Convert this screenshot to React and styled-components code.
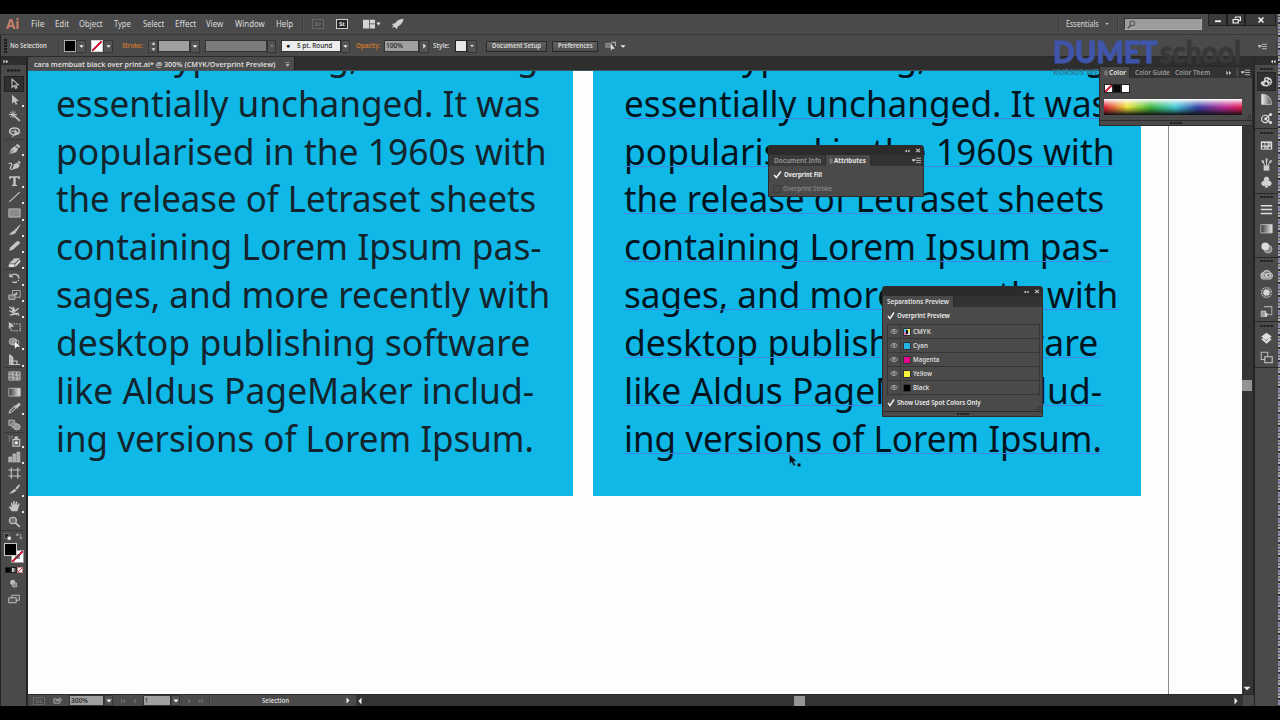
import { useLayoutEffect, useRef, useState } from "react";
import styled, { createGlobalStyle, css } from "styled-components";

const GlobalStyle = createGlobalStyle`
  * {
    box-sizing: border-box;
  }
  body {
    margin: 0;
    background: #000;
    overflow: hidden;
  }
`;

const ui = `"Noto Sans", "Open Sans", sans-serif`;

const Screen = styled.div`
  position: relative;
  display: flex;
  flex-direction: column;
  width: 1280px;
  height: 720px;
  padding: 14px 0;
  overflow: hidden;
  background: #000;
  font-family: ${ui};
  font-size: 7px;
  color: #dcdcdc;
`;

const MainRow = styled.div`
  display: flex;
  flex: 1;
  min-height: 0;
`;

const Bars = styled.div`
  display: flex;
  flex-direction: column;
  width: 1278px;
`;

const MenuBar = styled.div`
  display: flex;
  align-items: center;
  height: 21px;
  flex: none;
  background: #4a4a4a;
  border-bottom: 1px solid #393939;
  font-size: 8.4px;
`;

const ControlBar = styled.div`
  display: flex;
  align-items: center;
  height: 22px;
  flex: none;
  padding-top: 1px;
  background: #4a4a4a;
  border-bottom: 1px solid #2a2a2a;
  border-left: 1px solid #252525;
`;

const FitBox = styled.span`
  display: block;
  flex: none;
  width: ${(p) => p.$w}px;
  margin-left: ${(p) => p.$ml || 0}px;
  color: ${(p) => p.$color || "inherit"};
  font-weight: ${(p) => p.$weight || "inherit"};
  line-height: 1.3;
  white-space: nowrap;
`;

const FitInner = styled.span`
  display: inline-block;
  transform-origin: 0 50%;
`;

// text squeezed or stretched to an exact width
function Fit({ w, ml, color, weight, children }) {
  const ref = useRef(null);
  const [scale, setScale] = useState(1);

  useLayoutEffect(() => {
    setScale(w / ref.current.offsetWidth);
  }, [w]);

  return (
    <FitBox $w={w} $ml={ml} $color={color} $weight={weight}>
      <FitInner ref={ref} style={{ transform: `scaleX(${scale})` }}>
        {children}
      </FitInner>
    </FitBox>
  );
}

const Svg = styled.svg`
  display: block;
  flex: none;
  width: ${(p) => p.$w || 14}px;
  height: ${(p) => p.$h || p.$w || 14}px;
  margin-left: ${(p) => p.$ml || 0}px;
  fill: none;
  stroke: none;
  color: ${(p) => p.$color || "#c4c4c4"};
`;

const c = "currentColor";

const glyphs = {
  selection: <path d="M5 1.5v11l2.600-2.400 1.700 3.600 1.700-.8-1.600-3.500 3.400-.3z" stroke={c} strokeWidth="1.300" fill="#2c2c2c" />,
  direct: <path d="M5 1v12l2.800-2.600 1.800 4 2-.9-1.800-3.900 3.600-.3z" fill={c} />,
  wand: (
    <>
      <path d="M6.500 6.500 14.500 14.500" stroke={c} strokeWidth="2" />
      <path d="M6 1v10M1 6h10M2.500 2.500l7 7M9.500 2.500l-7 7" stroke={c} strokeWidth="1.200" />
    </>
  ),
  lasso: (
    <>
      <ellipse cx="8" cy="7" rx="6" ry="4.500" stroke={c} strokeWidth="2" />
      <path d="M4 8c3-3 7 0 4 3-2 2-3 1-2 4" stroke={c} strokeWidth="1.400" />
      <path d="m8 4 1 9 2-2 3 0z" fill={c} />
    </>
  ),
  pen: (
    <>
      <path d="M1.500 14.500 4 7.500l4.500-3.500 4 3.800-2.400 4.500z" fill={c} />
      <path d="m9.500 3.200 1.800-2.300 4 3.700-1.900 2z" fill={c} />
      <path d="m2 14 5-4.800" stroke="#4a4a4a" />
    </>
  ),
  curve: (
    <>
      <path d="m5.500 14 1.700-7 3.800-2 3.500 3-2 4z" fill={c} />
      <path d="m11.500 4.200 1.500-2 2.800 2.500-1.500 2z" fill={c} />
      <path d="M.8 6.500c3-2.500 5 0 3.200 3S1.500 14 6 13.500" stroke={c} strokeWidth="1.500" />
    </>
  ),
  type: <path d="M1.500 1.500h13v4h-1.200L12 3.800H9.500v9l1.800.7v1.200H4.700v-1.200l1.800-.7v-9H4L2.700 5.500H1.500z" fill={c} />,
  line: <path d="M1.500 14.500 14.500 1.500" stroke={c} strokeWidth="1.400" />,
  rect: <path d="M1 2.500h14v11H1z" fill="#8b8b8b" stroke={c} strokeWidth="1" />,
  brush: (
    <>
      <path d="M15 1 8 8.500l1.700 1.700z" fill={c} stroke={c} />
      <path d="M7.500 8.500 10 11c-1.500 3-5 3.500-9.500 3 3-.8 3.500-4.500 7-5.500z" fill={c} />
    </>
  ),
  pencil: <path d="m1.500 14.500 1-4.500L11 1.500q2-.7 3.500 1.500 .5 1-.2 2L6 13z" fill={c} />,
  eraser: (
    <>
      <path d="m1 10 7-7h7L8 10z" fill={c} />
      <path d="M1 11h7v3.500H1zM9 11l6-6.500v3.500L9 14.500z" fill="#e2e2e2" />
    </>
  ),
  rotate: (
    <>
      <path d="M4 4.500A5.500 5.500 0 1 1 5 13" stroke={c} strokeWidth="1.800" strokeDasharray="13 1.500 2 1.500" />
      <path d="M1.500 1.500v5.500h5.500z" fill={c} />
    </>
  ),
  scale: (
    <>
      <path d="M5.500 2h9.500v9H5.500z" stroke={c} />
      <path d="M1 8h7.500v6H1z" fill="#777" stroke={c} />
      <path d="m7 8 4-3.500v3z" fill={c} stroke={c} />
    </>
  ),
  warp: (
    <>
      <path d="M1.500 3c4 0 4 5 7 5s2-4 5-3M1.500 8c3-1 4 5 12 3M2 13c3 1 6-3 12 1" stroke={c} strokeWidth="1.700" />
      <path d="M6 1 9.500 7l-5 6z" fill={c} />
    </>
  ),
  free: (
    <>
      <path d="M3.500 4h11.500v9H3.500z" stroke={c} strokeDasharray="2 1.300" strokeWidth="1.500" />
      <path d="M1 1v9.500l3-3H8z" fill={c} />
    </>
  ),
  builder: (
    <>
      <circle cx="6" cy="6" r="4.500" stroke={c} fill="#888" />
      <circle cx="9.500" cy="7.500" r="4" stroke={c} />
      <path d="M8.500 6v9.500l2.500-2.500h4z" fill="#eee" />
    </>
  ),
  perspective: (
    <>
      <path d="M2 1v13h13M2 4l4 1.500V14M2 8.500l9 1V14M2 1l4 4" stroke={c} strokeWidth="1.500" />
      <path d="M3 5h3v9H3z" fill={c} />
    </>
  ),
  mesh: (
    <>
      <path d="M1 2.500h14v11H1z" fill="#757575" stroke={c} />
      <path d="M1.500 6c4-2 8 3 13 0M1.500 10c4-2 8 3 13 0M6 2.500c-2 4 2 7 0 11M11 2.500c-2 4 2 7 0 11" stroke="#ddd" strokeWidth=".9" />
    </>
  ),
  gradient: (
    <>
      <defs>
        <linearGradient id="grayRamp">
          <stop offset="0" stopColor="#383838" />
          <stop offset="1" stopColor="#e8e8e8" />
        </linearGradient>
      </defs>
      <path d="M1 3h14v10.500H1z" fill="url(#grayRamp)" stroke={c} />
    </>
  ),
  dropper: (
    <>
      <path d="m1.500 14.500 1-3L8 6l2 2-5.500 5.500z" stroke={c} strokeWidth="1.300" />
      <path d="m7.500 4 4.500 4.500M9 6l3.500-4q1.500-.6 2.200.500t-.2 2L11 8z" fill={c} stroke={c} />
    </>
  ),
  blend: (
    <>
      <path d="M1 1.500h7v7H1z" fill="#777" stroke={c} />
      <circle cx="8" cy="8.500" r="3.500" fill="#777" stroke={c} />
      <circle cx="11" cy="10.500" r="4" fill="#999" stroke={c} />
    </>
  ),
  spray: (
    <>
      <path d="M6 6h8.500v9H6z" fill="#6c6c6c" stroke={c} strokeWidth="1.300" />
      <path d="M8 2h4.500v4H8z" fill={c} />
      <circle cx="10.200" cy="10.300" r="2" fill="#eee" />
      <path d="M1 2h1.500M4 2h1.500M1 5h1.500M4 4h1.500M1 8h1.500" stroke={c} />
    </>
  ),
  graph: <path d="M1 14.500V8h3.500v6M6 14.500V4h3.500v10M11 14.500V1.500h3.500v13M.5 14.500h15" stroke={c} fill="#aaa" />,
  artboard: <path d="M4 .5v15M12 .5v15M.5 4h15M.5 12h15" stroke={c} strokeWidth="1.400" />,
  slice: (
    <>
      <path d="m1 14.500 7-7 2.500 2.500C7 13 4 14 1 14.500z" fill={c} />
      <path d="m9 7 4.500-5.500 1.500 1.500L11 9z" fill={c} />
    </>
  ),
  hand: (
    <path
      d="M4.500 15 1 9.500q0-1.500 1.700-1L4.500 10 3.500 4q.6-1.400 1.700 0l1 3.500L6.500 1.800q.8-1.400 1.700 0l.3 5.300L9.800 2.300q1.200-1 1.700.200l-.6 5 2-3q1.400-.8 1.400.5L12.700 11 11.500 15z"
      fill={c}
    />
  ),
  zoom: (
    <>
      <circle cx="6" cy="6" r="4.300" fill="#747474" stroke={c} strokeWidth="1.500" />
      <path d="m9 9 5.500 5.500" stroke={c} strokeWidth="2.200" />
    </>
  ),
  palette: (
    <>
      <path d="M8 2.500c4 0 7 2.500 7 5.500s-3 6-7.500 6S1 11.500 1 9.500s2.500-1.300 3.500-2S4 2.500 8 2.500z" fill="#d5d5d5" />
      <circle cx="8" cy="5.500" r="1.200" fill="#333" />
      <circle cx="11.500" cy="7" r="1.200" fill="#333" />
      <circle cx="7.500" cy="10.500" r="1.900" fill="#333" />
      <path d="m10 14 4-7" stroke="#555" />
    </>
  ),
  guide: (
    <>
      <defs>
        <linearGradient id="guideRamp">
          <stop offset="0" stopColor="#eee" />
          <stop offset="1" stopColor="#555" />
        </linearGradient>
      </defs>
      <path d="M2 1.500c8 0 12 5 12 12.500H2z" fill="url(#guideRamp)" stroke="#ccc" />
    </>
  ),
  share: (
    <>
      <circle cx="6.500" cy="8.500" r="4.500" stroke="#ddd" strokeWidth="1.500" />
      <circle cx="7" cy="8.500" r="1.800" fill="#ddd" />
      <path d="m7 8 6-5M7 9l6 4" stroke="#ddd" strokeWidth="1.500" />
      <circle cx="13" cy="3" r="1.900" fill="#ddd" />
      <circle cx="13" cy="13" r="1.900" fill="#ddd" />
    </>
  ),
  swatches: (
    <>
      <path d="M1 3h14v10H1z" fill="#ddd" />
      <path d="M2.500 5h3v3h-3zM6.500 5h3v3h-3zM10.500 9.500h3v2.500h-3zM2.500 9.500h3v2.500h-3z" fill="#555" />
      <path d="M10.500 5h3v3h-3zM6.500 9.500h3v2.500h-3z" fill="#999" />
    </>
  ),
  brushes: (
    <>
      <path d="M4.500 9h7v6.500h-7z" fill="#ccc" />
      <path d="M6 9 3.500 5M8 9V4M10 9l2-4" stroke="#ccc" strokeWidth="1.200" />
      <path d="M1.500 3.500 4 2.500l1.500 3-2 1zM7 .5h2.500L9 5H7zM12 3l3-.5L13.500 6h-2z" fill="#ccc" />
    </>
  ),
  club: (
    <path
      d="M8 1a3 3 0 0 1 2.500 5A3.200 3.200 0 1 1 9 11.500L10.500 14h-5L7 11.500A3.200 3.200 0 1 1 5.500 6 3 3 0 0 1 8 1z"
      fill="#d0d0d0"
    />
  ),
  lines: <path d="M1 3.500h14M1 8h14M1 13h14" stroke="#ddd" strokeWidth="1.800" />,
  transparency: (
    <>
      <circle cx="10" cy="10" r="4.800" fill="#8a8a8a" stroke="#bbb" />
      <circle cx="6.500" cy="6.500" r="4.800" fill="#ddd" />
    </>
  ),
  cloud: (
    <>
      <path d="M4.500 13.500a4 4 0 0 1-.3-7.800A5 5 0 0 1 13 6a4 4 0 0 1-.8 7.500z" stroke="#ccc" strokeWidth="1.300" fill="#777" />
      <ellipse cx="5.800" cy="9.500" rx="2.500" ry="2" stroke="#ddd" strokeWidth="1.300" />
      <ellipse cx="10.200" cy="9" rx="2.700" ry="2.300" stroke="#ddd" strokeWidth="1.300" />
    </>
  ),
  sun: (
    <>
      <circle cx="8" cy="8" r="6" stroke="#bbb" strokeWidth="2" strokeDasharray="1.300 1" />
      <circle cx="8" cy="8" r="4" fill="#d5d5d5" />
    </>
  ),
  styles: (
    <>
      <path d="M5 2h9.500v10H9" stroke="#aaa" strokeWidth="1.300" />
      <path d="M1.500 7.500H7V14H1.500z" fill="#999" stroke="#ccc" />
      <path d="m6 7 1.500 3 3 .5-2 2 .5 2.500-3-1.500" fill="#ddd" />
    </>
  ),
  layers: <path d="m8 1 6.500 4.500L8 10 1.500 5.500zM1.500 9 4 7.500 8 11l4-3.500L14.500 9 8 14.500z" fill="#ddd" />,
  boards: (
    <>
      <path d="M1.500 1.500h8v9h-8z" stroke="#bbb" strokeWidth="1.300" />
      <path d="M6 7h9v7.500H6z" fill="#4a4a4a" stroke="#ccc" strokeWidth="1.300" />
    </>
  ),
  tri: <path d="M1 4h14l-7 8z" fill={c} />,
  triRight: <path d="M4 1v14l8-7z" fill={c} />,
  triLeft: <path d="M12 1v14L4 8z" fill={c} />,
  first: <path d="M3 2h2.500v12H3zM14 2v12L6 8z" fill={c} />,
  last: <path d="M13 2h-2.500v12H13zM2 2v12l8-6z" fill={c} />,
  updown: <path d="M8 0l6 5H2zM8 16l6-5H2z" fill={c} />,
  close: <path d="m3 3 10 10M13 3 3 13" stroke={c} strokeWidth="3" />,
  chevronsRight: <path d="M1 2v12l6-6zM8 2v12l6-6z" fill={c} />,
  chevronsLeft: <path d="M8 2v12L2 8zM15 2v12L9 8z" fill={c} />,
  menu: <path d="M0 6h6L3 10zM7 3h9M7 8h9M7 13h9" fill={c} stroke={c} strokeWidth="1.600" />,
  tabMark: <path d="M1 4h14M3 9h10l-5 5z" stroke={c} fill={c} strokeWidth="1.700" />,
  diamond: <path d="M2 6 8 1l6 5zM2 10l6 5 6-5z" stroke={c} strokeWidth="1.500" />,
  eye: (
    <>
      <path d="M1 8c3-6 11-6 14 0-3 6-11 6-14 0z" stroke="#bbb" strokeWidth="1.700" />
      <circle cx="8" cy="7.500" r="2.700" fill="#999" />
    </>
  ),
  check: <path d="m2 8 4 5 8-12" stroke="#f2f2f2" strokeWidth="2.800" />,
  rocket: (
    <path d="M15.500 1C10 1.500 6.500 4 5 7L1 8l2 2-2 3 3.500-1L7 15l1.500-4C12 9.500 15 6 15.500 1z" fill="#d0d0d0" />
  ),
  arrange: <path d="M0 1h8v14H0zM9 1h7v6H9zM9 8.500h7V15H9z" fill={c} />,
  align: (
    <>
      <path d="M1 4h8v6H1z" fill="#777" stroke="#aaa" />
      <path d="M9 2h6v6" stroke="#bbb" strokeWidth="1.500" />
      <path d="M8.500 4v11l2.500-2.500h3.500z" fill="#ddd" />
    </>
  ),
  swap: <path d="M3 4h8v8M11 14l-3-3h6zM3 1v6L0 4z" fill="none" stroke="#ccc" strokeWidth="1.300" />,
  mini: (
    <>
      <path d="M1 1h9v9H1z" fill="#222" stroke="#aaa" />
      <path d="M7 7h7v7H7z" fill="#eee" stroke="#666" />
    </>
  ),
  drawMode: (
    <>
      <circle cx="6.500" cy="6" r="4.500" fill="#bbb" />
      <path d="M6.500 7h7v7h-7z" fill="#888" stroke="#ddd" />
    </>
  ),
  screenMode: (
    <>
      <path d="M5 2h10v8H5z" stroke="#ccc" strokeWidth="1.300" />
      <path d="M1 6h10v8H1z" fill="#555" stroke="#ccc" strokeWidth="1.300" />
    </>
  ),
  search: (
    <>
      <circle cx="9.500" cy="6" r="4.300" stroke={c} strokeWidth="1.600" />
      <path d="m6.500 9.500-5 5" stroke={c} strokeWidth="2" />
    </>
  ),
  restore: (
    <>
      <path d="M6 2h9v7h-3M6 5V2" stroke={c} strokeWidth="2.200" />
      <path d="M2 7h9v7H2z" stroke={c} strokeWidth="2.200" />
    </>
  ),
  minimize: <path d="M2 10h12v4H2z" fill={c} />,
  grip: <path d="M0 8h3.300M4.200 8h3.300M8.400 8h3.300M12.600 8H16" stroke="#161616" strokeWidth="4.500" />,
  corner: <path d="M14 3v2M14 8v2M9 8v2M14 13v2M9 13v2M4 13v2" stroke="#161616" strokeWidth="2.500" />,
  shareBox: <path d="M6 4H1.500v10H12v-4M5 10c0-4 3-5 6-5V2l4.500 4.500L11 10V7.500C8 7.500 6 8 5 10z" stroke={c} strokeWidth="1.500" />,
};

function Icon({ name, w, h, ml, color }) {
  return (
    <Svg viewBox="0 0 16 16" preserveAspectRatio="none" $w={w} $h={h} $ml={ml} $color={color}>
      {glyphs[name]}
    </Svg>
  );
}

const AppMark = styled.div`
  margin-left: 6px;
  width: 12px;
  font: 700 13.5px/20px "Open Sans", sans-serif;
  color: #c8806a;
`;

const AppBadge = styled.div`
  width: 12px;
  height: ${(p) => p.$h || 10}px;
  margin-left: ${(p) => p.$ml}px;
  border: 1px solid ${(p) => (p.$dim ? "#666" : "#d0d0d0")};
  background: ${(p) => (p.$dim ? "#484848" : "#262626")};
  color: ${(p) => (p.$dim ? "#6c6c6c" : "#f0f0f0")};
  font: 700 6px/${(p) => (p.$h || 10) - 2}px ${ui};
  text-align: center;
`;

const Spacer = styled.div`
  flex: 1;
`;

const Divider = styled.div`
  width: 2px;
  height: ${(p) => p.$h || 15}px;
  margin-left: ${(p) => p.$ml || 0}px;
  border-left: 1px solid #3c3c3c;
  border-right: 1px solid #535353;
`;

const SearchBox = styled.div`
  display: flex;
  align-items: center;
  width: 78px;
  height: 12px;
  margin-left: 5px;
  padding-left: 2px;
  background: #9c9c9c;
  border: 1px solid #333;
  border-right-color: #aaa;
  border-bottom-color: #aaa;
`;

const WindowButton = styled.div`
  display: flex;
  align-items: center;
  justify-content: center;
  align-self: flex-start;
  width: ${(p) => p.$w}px;
  height: 12px;
  margin-left: ${(p) => p.$ml || 0}px;
  background: #3a3a3a;
  border: solid #202020;
  border-width: 0 1px 1px;
`;

const ControlGrip = styled.div`
  width: 3px;
  height: 14px;
  margin-left: 3px;
  background: repeating-linear-gradient(#1c1c1c 0 2px, #4a4a4a 2px 3px);
`;

const Swatch = styled.div`
  width: ${(p) => p.$w || 12}px;
  height: ${(p) => p.$h || 12}px;
  margin-left: ${(p) => p.$ml || 0}px;
  background: ${(p) => p.$fill};
  border: 1px solid ${(p) => p.$edge || "#222"};
`;

const slash = "linear-gradient(to top left, #fff 0 41%, #d0213f 43% 57%, #fff 59%)";

const Drop = styled.div`
  display: flex;
  align-items: center;
  justify-content: center;
  width: ${(p) => p.$w || 9}px;
  height: ${(p) => p.$h || 13}px;
  margin-left: ${(p) => p.$ml || 0}px;
  background: #525252;
  border: 1px solid #363636;
`;

const Field = styled.div`
  display: flex;
  align-items: center;
  width: ${(p) => p.$w}px;
  height: ${(p) => p.$h || 12}px;
  margin-left: ${(p) => p.$ml || 0}px;
  padding-left: 1px;
  background: ${(p) => p.$bg || "#a0a0a0"};
  border: 1px solid #333;
  color: #1d1d1d;
`;

const PushButton = styled.div`
  display: flex;
  align-items: center;
  justify-content: center;
  width: ${(p) => p.$w}px;
  height: 11px;
  margin-left: ${(p) => p.$ml}px;
  background: linear-gradient(#626262, #4e4e4e);
  border: 1px solid #282828;
  font-weight: 600;
`;

const Workspace = styled.div`
  display: flex;
  flex: 1;
  min-height: 0;
  background: #2e2e2e;
`;

const ToolColumn = styled.div`
  display: flex;
  flex-direction: column;
  width: 28px;
  border: solid #242424;
  border-width: 0 2px 0 1px;
  background: #4a4a4a;
`;

const ColumnTop = styled.div`
  display: flex;
  align-items: center;
  justify-content: ${(p) => (p.$right ? "flex-end" : "flex-start")};
  height: 8px;
  flex: none;
  padding: 0 2px;
  background: #2e2e2e;
`;

const ColumnGrip = styled.div`
  display: flex;
  justify-content: center;
  align-items: center;
  height: ${(p) => p.$h || 10.5}px;
`;

const ToolSlot = styled.div`
  position: relative;
  display: flex;
  justify-content: center;
  align-items: center;
  width: 20px;
  height: 16.24px;
  margin-left: 3px;
  ${(p) =>
    p.$split &&
    css`
      box-shadow: 0 -1px 0 #3a3a3a;
    `}
  ${(p) =>
    p.$active &&
    css`
      background: #303030;
      outline: 1px solid #222;
      outline-offset: -1px;
    `}
  ${(p) =>
    p.$more &&
    css`
      &::after {
        content: "";
        position: absolute;
        right: 0;
        bottom: 1px;
        width: 2px;
        height: 2px;
        background: #e6e6e6;
      }
    `}
`;

const ToolRow = styled.div`
  display: flex;
  align-items: center;
  justify-content: center;
  gap: ${(p) => p.$gap || 0}px;
  height: ${(p) => p.$h}px;
  margin-top: ${(p) => p.$mt || 0}px;
  border-top: ${(p) => (p.$split ? "1px solid #3a3a3a" : 0)};
`;

const ColorPair = styled.div`
  position: relative;
  width: 20px;
  height: 20px;
  margin: 1px 0 0 3px;
`;

const StrokeChip = styled.div`
  position: absolute;
  right: 0;
  bottom: 0;
  width: 13px;
  height: 13px;
  background: ${slash};
  border: 1px solid #999;

  &::after {
    content: "";
    position: absolute;
    inset: 3px;
    background: #4a4a4a;
    opacity: 0.6;
  }
`;

const FillChip = styled.div`
  position: absolute;
  left: 0;
  top: 0;
  width: 13px;
  height: 13px;
  background: #000;
  border: 1px solid #c8c8c8;
`;

const Center = styled.div`
  display: flex;
  flex-direction: column;
  width: 1226px;
  flex: none;
`;

const TabStrip = styled.div`
  height: 14px;
  flex: none;
  background: #2e2e2e;
  border-bottom: 1px solid #40585f;
`;

const DocTab = styled.div`
  display: flex;
  align-items: center;
  width: 267px;
  height: 13px;
  padding-top: 1px;
  background: #4c4c4c;
  border-right: 1px solid #222;
  font-size: 7.8px;
  font-weight: 600;
`;

const CanvasRow = styled.div`
  display: flex;
  flex: 1;
  min-height: 0;
`;

const Canvas = styled.div`
  width: 1214px;
  overflow: hidden;
  background: #fdfdfd;
`;

const Artboard = styled.div`
  display: flex;
  gap: 20px;
  width: 1141px;
  height: 100%;
  border-right: 1px solid #8c8c8c;
`;

const Block = styled.div`
  width: ${(p) => p.$w}px;
  height: 425px;
  flex: none;
  padding-left: ${(p) => p.$pl}px;
  overflow: hidden;
  background: #0fb8e7;
  color: ${(p) => p.$ink};
`;

const Lines = styled.div`
  margin-top: -39.2px;
`;

const Line = styled.div`
  position: relative;
  width: ${(p) => p.$w}px;
  height: 47.85px;
  font: 400 36.8px/47.85px "Noto Sans", sans-serif;

  span {
    line-height: 47.85px;
  }

  ${(p) =>
    p.$guide &&
    css`
      &::after {
        content: "";
        position: absolute;
        left: 0;
        right: 0;
        top: 38px;
        height: 1px;
        background: #3f86e4;
      }
    `}
`;

const VScroll = styled.div`
  display: flex;
  flex-direction: column;
  align-items: center;
  width: 12px;
  padding: 309px 1px 2px 0;
  background: #353535;
  border-right: 1px solid #222;
`;

const VThumb = styled.div`
  width: 10px;
  height: 11px;
  background: #949494;
`;

const StatusBar = styled.div`
  display: flex;
  align-items: center;
  height: 12px;
  flex: none;
  background: #4a4a4a;
  border-top: 1px solid #2a2a2a;
`;

const HScroll = styled.div`
  display: flex;
  align-items: center;
  flex: 1;
  height: 11px;
  margin-left: 5px;
  background: #343434;
`;

const HThumb = styled.div`
  width: 11px;
  height: 10px;
  margin-left: 431px;
  background: #959595;
`;

const ScrollCorner = styled.div`
  width: 11px;
  height: 11px;
  margin-left: 4px;
  background: #484848;
`;

const Dock = styled.div`
  display: flex;
  flex-direction: column;
  width: 24px;
  background: #4a4a4a;
  border-left: 1px solid #242424;
`;

const DockGroup = styled.div`
  display: flex;
  flex-direction: column;
  align-items: center;
  padding-bottom: 0.5px;
  border-bottom: 1px solid #272727;
`;

const DockSlot = styled.div`
  display: flex;
  align-items: center;
  justify-content: center;
  width: 19px;
  height: 18.6px;
  ${(p) =>
    p.$active &&
    css`
      background: #303030;
      box-shadow: inset 0 0 0 1px #262626;
    `}
`;

// codec garbage along the right edge of the capture
const EdgeNoise = styled.div`
  width: 2px;
  flex: none;
  background: repeating-linear-gradient(
    #8f8fa8 0 2px, #39435c 2px 3px, #a39a86 3px 5px, #4a6da0 5px 6px,
    #c0a8a8 6px 8px, #2f2f52 8px 10px, #9fa86a 10px 11px, #8074a8 11px 13px
  );
`;

const Floating = styled.div`
  position: absolute;
  left: ${(p) => p.$x}px;
  top: ${(p) => p.$y}px;
  display: flex;
  flex-direction: column;
  width: ${(p) => p.$w}px;
  height: ${(p) => p.$h}px;
  background: #4a4a4a;
  border: 1px solid #2c2c2c;
  border-radius: ${(p) => (p.$round ? "3px 3px 0 0" : 0)};
  font-weight: 600;
`;

const TitleStrip = styled.div`
  display: flex;
  align-items: center;
  justify-content: flex-end;
  gap: 5px;
  height: ${(p) => p.$h || 9}px;
  flex: none;
  padding-right: 2px;
  background: #2b2b2b;
`;

const Tabs = styled.div`
  display: flex;
  align-items: center;
  height: 11px;
  flex: none;
  padding-right: 2px;
  background: #333;
`;

const Tab = styled.div`
  display: flex;
  align-items: center;
  width: ${(p) => p.$w}px;
  height: 11px;
  padding-left: ${(p) => p.$pl || 4}px;
  gap: 1px;
  background: ${(p) => (p.$on ? "#4a4a4a" : "#3a3a3a")};
  border-right: 1px solid #2a2a2a;
  color: ${(p) => (p.$on ? "#e4e4e4" : "#999")};
`;

const Chips = styled.div`
  display: flex;
  margin: 6px 0 0 4px;
`;

const Spectrum = styled.div`
  width: 138px;
  height: 16px;
  margin: 6px 0 0 4px;
  background:
    linear-gradient(#fff 0, rgba(255, 255, 255, 0.5) 22%, transparent 50%, rgba(0, 0, 0, 0.35) 72%, #111 100%),
    linear-gradient(90deg, #e21f3c 0, #f0e63c 17%, #3fb83f 34%, #46cbdc 52%, #3b46a8 68%, #c02c98 88%, #e21f50 100%);
`;

const PanelFoot = styled.div`
  display: flex;
  align-items: center;
  justify-content: center;
  height: 5px;
  margin-top: auto;
  border-top: 1px solid #2c2c2c;
`;

const CheckRow = styled.div`
  display: flex;
  align-items: center;
  height: ${(p) => p.$h}px;
  margin-top: ${(p) => p.$mt || 0}px;
  padding-left: 4px;
  color: ${(p) => (p.$off ? "#858585" : "#efefef")};
`;

const EmptyBox = styled.div`
  width: 8px;
  height: 8px;
  border: 1px solid #3a3a3a;
`;

const InkList = styled.div`
  width: 153px;
  margin-left: 4px;
  border: 1px solid #363636;
  border-bottom: 0;
`;

const InkRow = styled.div`
  display: flex;
  align-items: center;
  height: 14px;
  border-bottom: 1px solid #363636;
`;

const EyeCell = styled.div`
  display: flex;
  align-items: center;
  justify-content: center;
  width: 13px;
  height: 13px;
  border-right: 1px solid #3a3a3a;
`;

const cmykFill =
  "linear-gradient(#111, #111) 50% 50% / 2px 4px no-repeat, conic-gradient(#f2ee52 0 25%, #ddd 25% 50%, #e56cc0 50% 75%, #4cc3e8 75%)";

const ResizeCorner = styled.div`
  position: absolute;
  right: 1px;
  bottom: 6px;
`;

const Watermark = styled.div`
  position: absolute;
  left: 1053px;
  top: 31px;
  display: flex;
  font: 900 31px/1 Lato, sans-serif;
  color: #3f55ab;
  -webkit-text-stroke: 0.9px;
`;

const WatermarkTag = styled.div`
  position: absolute;
  left: 1053px;
  top: 68px;
  font: 900 7.5px/1 Lato, sans-serif;
  color: #247f9b;
`;

const Pointer = styled.div`
  position: absolute;
  left: 788px;
  top: 454px;
`;

const menus = [
  ["File", 13, 13],
  ["Edit", 14, 11],
  ["Object", 24, 10],
  ["Type", 17, 11],
  ["Select", 21, 12],
  ["Effect", 21, 11],
  ["View", 17, 10],
  ["Window", 30, 12],
  ["Help", 17, 11],
];

const tools = [
  { name: "selection", active: true },
  { name: "direct", more: true },
  { name: "wand" },
  { name: "lasso" },
  { name: "pen", more: true, split: true },
  { name: "curve" },
  { name: "type", more: true },
  { name: "line", more: true },
  { name: "rect", more: true },
  { name: "brush", more: true },
  { name: "pencil", more: true },
  { name: "eraser", more: true },
  { name: "rotate", more: true, split: true },
  { name: "scale", more: true },
  { name: "warp", more: true },
  { name: "free" },
  { name: "builder", more: true },
  { name: "perspective", more: true },
  { name: "mesh", split: true },
  { name: "gradient" },
  { name: "dropper", more: true },
  { name: "blend" },
  { name: "spray", more: true, split: true },
  { name: "graph", more: true },
  { name: "artboard" },
  { name: "slice", more: true },
  { name: "hand", more: true },
  { name: "zoom" },
];

const dockGroups = [
  ["palette", "guide", "share"],
  ["swatches", "brushes", "club"],
  ["lines", "gradient", "transparency"],
  ["cloud", "sun", "styles"],
  ["layers", "boards"],
];

const lorem = [
  ["tronic typesetting, remaining", 483],
  ["essentially unchanged. It was", 484],
  ["popularised in the 1960s with", 491],
  ["the release of Letraset sheets", 480],
  ["containing Lorem Ipsum pas-", 485.5],
  ["sages, and more recently with", 494.5],
  ["desktop publishing software", 474.5],
  ["like Aldus PageMaker includ-", 478.5],
  ["ing versions of Lorem Ipsum.", 477.5],
];

const inks = [
  ["CMYK", cmykFill, 18],
  ["Cyan", "#20b4e4", 15],
  ["Magenta", "#e4048c", 26],
  ["Yellow", "#f8f43c", 19],
  ["Black", "#000", 16],
];

function TextBlock({ w, pl, ink, guide }) {
  return (
    <Block $w={w} $pl={pl} $ink={ink}>
      <Lines>
        {lorem.map(([text, width]) => (
          <Line key={text} $w={width} $guide={guide}>
            <Fit w={width}>{text}</Fit>
          </Line>
        ))}
      </Lines>
    </Block>
  );
}

function TopMenu() {
  return (
    <MenuBar>
      <AppMark>Ai</AppMark>
      {menus.map(([label, w, ml]) => (
        <Fit key={label} w={w} ml={ml}>
          {label}
        </Fit>
      ))}
      <Divider $ml={9} />
      <AppBadge $ml={8} $dim>Br</AppBadge>
      <AppBadge $ml={12}>St</AppBadge>
      <Icon name="arrange" w={12} h={10} ml={15} color="#d4d4d4" />
      <Icon name="tri" w={5} h={6} ml={1} color="#e4e4e4" />
      <Icon name="rocket" w={13} h={12} ml={10} />
      <Spacer />
      <Divider />
      <Fit w={33} ml={6}>Essentials</Fit>
      <Icon name="tri" w={4} h={4} ml={6} />
      <Divider $ml={8} />
      <SearchBox>
        <Icon name="search" w={9} color="#3c3c3c" />
      </SearchBox>
      <WindowButton $w={19} $ml={6}>
        <Icon name="minimize" w={8} h={7} color="#f4f4f4" />
      </WindowButton>
      <WindowButton $w={18}>
        <Icon name="restore" w={9} h={8} color="#f0f0f0" />
      </WindowButton>
      <WindowButton $w={31}>
        <Icon name="close" w={8} h={8} color="#f4f4f4" />
      </WindowButton>
      <Divider />
    </MenuBar>
  );
}

function Controls() {
  return (
    <ControlBar>
      <ControlGrip />
      <Fit w={37} ml={3} weight={600}>No Selection</Fit>
      <Divider $ml={11} />
      <Swatch $fill="#000" $ml={4} $edge="#aaa" />
      <Drop $w={10} $ml={0}><Icon name="tri" w={5} h={5} color="#eee" /></Drop>
      <Swatch $fill={slash} $ml={5} $edge="#ccc" />
      <Drop $w={10}><Icon name="tri" w={5} h={5} color="#eee" /></Drop>
      <Fit w={21} ml={9} color="#d27a2c" weight={600}>Stroke:</Fit>
      <Drop $w={10} $ml={5}><Icon name="updown" w={5} h={9} color="#ddd" /></Drop>
      <Field $w={32} />
      <Drop $w={10}><Icon name="tri" w={6} h={5} color="#eee" /></Drop>
      <Field $w={62} $ml={5} $bg="#7c7c7c" />
      <Drop><Icon name="tri" w={4} h={4} color="#888" /></Drop>
      <Field $w={60} $ml={5} $bg="#ececec">
        <Fit w={4} ml={3}>●</Fit>
        <Fit w={35} ml={7} weight={500}>5 pt. Round</Fit>
      </Field>
      <Drop><Icon name="tri" w={5} h={5} color="#eee" /></Drop>
      <Fit w={24} ml={6} color="#d27a2c" weight={600}>Opacity:</Fit>
      <Field $w={35} $ml={4}>
        <Fit w={17} weight={500}>100%</Fit>
      </Field>
      <Drop $w={10}><Icon name="triRight" w={5} h={6} color="#eee" /></Drop>
      <Fit w={17} ml={4} weight={600}>Style:</Fit>
      <Swatch $fill="#e6e6e6" $ml={5} />
      <Drop $w={10}><Icon name="tri" w={4} h={4} color="#eee" /></Drop>
      <PushButton $w={61} $ml={9}>
        <Fit w={49}>Document Setup</Fit>
      </PushButton>
      <PushButton $w={46} $ml={5}>
        <Fit w={35}>Preferences</Fit>
      </PushButton>
      <Icon name="align" w={11} h={10} ml={7} />
      <Icon name="tri" w={6} h={5} ml={4} color="#eee" />
      <Spacer />
      <Icon name="menu" w={9} h={7} color="#ccc" />
      <Divider $ml={9} />
    </ControlBar>
  );
}

function Toolbox() {
  return (
    <ToolColumn>
      <ColumnTop>
        <Icon name="chevronsRight" w={6} h={5} color="#ccc" />
      </ColumnTop>
      <ColumnGrip>
        <Icon name="grip" w={13} h={7} />
      </ColumnGrip>
      {tools.map((t) => (
        <ToolSlot key={t.name} $active={t.active} $more={t.more} $split={t.split}>
          <Icon name={t.name} w={13} h={12} />
        </ToolSlot>
      ))}
      <ToolRow $h={12} $gap={4} $split>
        <Icon name="mini" w={8} />
        <Icon name="swap" w={7} />
      </ToolRow>
      <ColorPair>
        <StrokeChip />
        <FillChip />
      </ColorPair>
      <ToolRow $h={8} $mt={3}>
        <Swatch $w={6} $h={6} $fill="#000" />
        <Swatch $w={6} $h={6} $fill="linear-gradient(90deg, #eee, #333)" />
        <Swatch $w={6} $h={6} $fill={slash} $edge="#c88" />
      </ToolRow>
      <ToolRow $h={10} $mt={4}>
        <Icon name="drawMode" w={9} />
      </ToolRow>
      <ToolRow $h={12} $mt={5}>
        <Icon name="screenMode" w={12} h={10} />
      </ToolRow>
    </ToolColumn>
  );
}

function Status() {
  return (
    <StatusBar>
      <AppBadge $ml={5} $h={8} $dim>GL</AppBadge>
      <Icon name="shareBox" w={9} h={7} ml={8} />
      <Field $w={35} $h={11} $ml={7}>
        <Fit w={17} weight={500}>300%</Fit>
      </Field>
      <Drop $h={11}><Icon name="tri" w={6} h={6} color="#eee" /></Drop>
      <Icon name="first" w={6} h={6} ml={7} color="#6e6e6e" />
      <Icon name="triLeft" w={5} h={6} ml={6} color="#6e6e6e" />
      <Field $w={28} $h={11} $ml={6}>
        <Fit w={3} weight={500}>1</Fit>
      </Field>
      <Drop $h={11}><Icon name="tri" w={6} h={6} color="#eee" /></Drop>
      <Icon name="triRight" w={5} h={6} ml={7} color="#6e6e6e" />
      <Icon name="last" w={6} h={6} ml={6} color="#6e6e6e" />
      <Divider $ml={5} $h={10} />
      <Fit w={27} ml={51} weight={600}>Selection</Fit>
      <Icon name="triRight" w={6} h={7} ml={56} color="#eee" />
      <HScroll>
        <Icon name="triLeft" w={6} h={8} ml={1} color="#eee" />
        <HThumb />
        <Spacer />
        <Icon name="triRight" w={6} h={8} color="#eee" />
        <ScrollCorner />
      </HScroll>
    </StatusBar>
  );
}

function ColorPanel() {
  return (
    <Floating $x={1099} $y={65} $w={154} $h={61}>
      <TitleStrip $h={1} />
      <Tabs>
        <Tab $on $w={30}>
          <Icon name="diamond" w={4} h={6} />
          <Fit w={17}>Color</Fit>
        </Tab>
        <Fit w={35} ml={5} color="#999">Color Guide</Fit>
        <Fit w={35} ml={5} color="#999">Color Them</Fit>
        <Spacer />
        <Icon name="chevronsRight" w={6} h={6} color="#bbb" />
        <Divider $ml={4} $h={9} />
        <Icon name="menu" w={9} h={7} ml={3} color="#ccc" />
      </Tabs>
      <Chips>
        <Swatch $w={9} $h={9} $fill={slash} />
        <Swatch $w={8} $h={9} $fill="#080808" />
        <Swatch $w={9} $h={9} $fill="#fff" />
      </Chips>
      <Spectrum />
      <PanelFoot>
        <Icon name="grip" w={12} h={6} />
      </PanelFoot>
      <ResizeCorner>
        <Icon name="corner" w={6} />
      </ResizeCorner>
    </Floating>
  );
}

function AttributesPanel() {
  return (
    <Floating $x={768} $y={145} $w={156} $h={52} $round>
      <TitleStrip>
        <Icon name="chevronsLeft" w={6} h={4} />
        <Icon name="close" w={6} h={5} />
      </TitleStrip>
      <Tabs>
        <Tab $w={57} $pl={5}>
          <Fit w={47}>Document Info</Fit>
        </Tab>
        <Tab $on $w={45} $pl={3}>
          <Icon name="diamond" w={4} h={6} />
          <Fit w={32} weight={700}>Attributes</Fit>
        </Tab>
        <Spacer />
        <Icon name="menu" w={9} h={7} color="#ccc" />
      </Tabs>
      <CheckRow $h={15} $mt={1}>
        <Icon name="check" w={9} h={8} />
        <Fit w={38} ml={2} weight={700}>Overprint Fill</Fit>
      </CheckRow>
      <CheckRow $h={13} $off>
        <EmptyBox />
        <Fit w={49} ml={2}>Overprint Stroke</Fit>
      </CheckRow>
    </Floating>
  );
}

function SeparationsPanel() {
  return (
    <Floating $x={882} $y={286} $w={161} $h={131} $round>
      <TitleStrip>
        <Icon name="chevronsLeft" w={6} h={4} />
        <Icon name="close" w={6} h={5} />
      </TitleStrip>
      <Tabs>
        <Tab $on $w={71}>
          <Fit w={62}>Separations Preview</Fit>
        </Tab>
      </Tabs>
      <CheckRow $h={16} $mt={1}>
        <Icon name="check" w={8} h={8} />
        <Fit w={53} ml={2}>Overprint Preview</Fit>
      </CheckRow>
      <InkList>
        {inks.map(([name, fill, w]) => (
          <InkRow key={name}>
            <EyeCell>
              <Icon name="eye" w={8} h={7} />
            </EyeCell>
            <Swatch $w={8} $h={8} $ml={2} $fill={fill} $edge="#333" />
            <Fit w={w} ml={1.5}>{name}</Fit>
          </InkRow>
        ))}
      </InkList>
      <CheckRow $h={15}>
        <Icon name="check" w={8} h={8} />
        <Fit w={84} ml={2}>Show Used Spot Colors Only</Fit>
      </CheckRow>
      <PanelFoot>
        <Icon name="grip" w={12} h={6} />
      </PanelFoot>
      <ResizeCorner>
        <Icon name="corner" w={6} />
      </ResizeCorner>
    </Floating>
  );
}

function App() {
  return (
    <>
      <GlobalStyle />
      <Screen>
        <MainRow>
          <Bars>
            <TopMenu />
            <Controls />
            <Workspace>
              <Toolbox />
              <Center>
                <TabStrip>
                  <DocTab>
                    <Fit w={241} ml={6}>
                      cara membuat black over print.ai* @ 300% (CMYK/Overprint Preview)
                    </Fit>
                    <Icon name="tabMark" w={5} h={6} ml={10} />
                  </DocTab>
                </TabStrip>
                <CanvasRow>
                  <Canvas>
                    <Artboard>
                      <TextBlock w={545} pl={28} ink="#14242c" />
                      <TextBlock w={548} pl={31} ink="#04141f" guide />
                    </Artboard>
                  </Canvas>
                  <VScroll>
                    <VThumb />
                    <Spacer />
                    <Icon name="tri" w={8} h={7} color="#eee" />
                  </VScroll>
                </CanvasRow>
                <Status />
              </Center>
              <Dock>
                <ColumnTop $right>
                  <Icon name="chevronsLeft" w={6} h={5} color="#ccc" />
                </ColumnTop>
                {dockGroups.map((group) => (
                  <DockGroup key={group[0]}>
                    <ColumnGrip $h={7}>
                      <Icon name="grip" w={13} h={6} />
                    </ColumnGrip>
                    {group.map((name) => (
                      <DockSlot key={name} $active={name === "palette"}>
                        <Icon name={name} w={13} h={13} />
                      </DockSlot>
                    ))}
                  </DockGroup>
                ))}
              </Dock>
            </Workspace>
          </Bars>
          <EdgeNoise />
        </MainRow>
        <Watermark>
          <Fit w={105}>DUMET</Fit>
          <Fit w={81} ml={2} color="#393939">school</Fit>
        </Watermark>
        <WatermarkTag>
          <Fit w={46}>KURSUS WE</Fit>
        </WatermarkTag>
        <ColorPanel />
        <AttributesPanel />
        <SeparationsPanel />
        <Pointer>
          <Svg viewBox="0 0 14 14" $w={14}>
            <path d="M1.500.5v9.500l2.300-2 1.800 4 1.800-.8-1.800-3.900 3-.3z" fill="#08131c" stroke="#2d93bd" strokeWidth=".5" />
            <path d="M9.500 9.500h3v3h-3z" fill="#08131c" />
          </Svg>
        </Pointer>
      </Screen>
    </>
  );
}

export default App;
